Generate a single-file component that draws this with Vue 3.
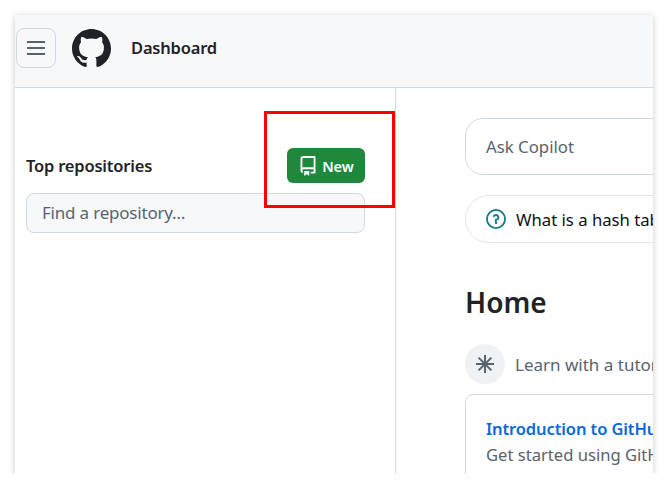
<script setup>
const repoPath = "M2 2.5A2.5 2.5 0 0 1 4.5 0h8.75a.75.75 0 0 1 .75.75v12.5a.75.75 0 0 1-.75.75h-2.5a.75.75 0 0 1 0-1.5h1.75v-2h-8a1 1 0 0 0-.714 1.7.75.75 0 1 1-1.072 1.05A2.495 2.495 0 0 1 2 11.5Zm10.5-1h-8a1 1 0 0 0-1 1v6.708A2.486 2.486 0 0 1 4.5 9h8ZM5 12.25a.25.25 0 0 1 .25-.25h3.5a.25.25 0 0 1 .25.25v3.25a.25.25 0 0 1-.4.2l-1.45-1.087a.249.249 0 0 0-.3 0L5.4 15.7a.25.25 0 0 1-.4-.2Z";
const markPath = "M8 0c4.42 0 8 3.58 8 8a8.013 8.013 0 0 1-5.45 7.59c-.4.08-.55-.17-.55-.38 0-.27.01-1.13.01-2.2 0-.75-.25-1.23-.54-1.48 1.78-.2 3.65-.88 3.65-3.95 0-.88-.31-1.59-.82-2.15.08-.2.36-1.02-.08-2.12 0 0-.67-.22-2.2.82-.64-.18-1.32-.27-2-.27-.68 0-1.36.09-2 .27-1.53-1.03-2.2-.82-2.2-.82-.44 1.1-.16 1.92-.08 2.12-.51.56-.82 1.28-.82 2.15 0 3.06 1.86 3.75 3.64 3.95-.23.2-.44.55-.51 1.07-.46.21-1.61.55-2.33-.66-.15-.24-.6-.83-1.23-.82-.67.01-.27.38.01.53.34.19.73.9.82 1.13.16.45.68 1.31 2.69.94 0 .67.01 1.3.01 1.49 0 .21-.15.45-.55.38A7.995 7.995 0 0 1 0 8c0-4.42 3.58-8 8-8Z";
const questionPath = "M0 8a8 8 0 1 1 16 0A8 8 0 0 1 0 8Zm8-6.5a6.5 6.5 0 1 0 0 13 6.5 6.5 0 0 0 0-13ZM6.92 6.085h.001a.749.749 0 1 1-1.299-.744c.428-.747 1.22-1.341 2.378-1.341 1.273 0 2.721.993 2.721 2.75 0 .901-.502 1.58-1.057 2.011-.273.212-.562.372-.82.485a2.242 2.242 0 0 1-.345.12V9.5a.75.75 0 0 1-1.5 0V8.75a.75.75 0 0 1 .75-.75c.002 0 .03-.002.059-.009.105-.024.217-.063.349-.12a2.56 2.56 0 0 0 .521-.312c.34-.264.5-.55.5-.809 0-.79-.653-1.25-1.221-1.25-.507 0-.824.217-1.04.585ZM9 11a1 1 0 1 1-2 0 1 1 0 0 1 2 0Z";
</script>

<template>
  <div class="window">
    <header class="topbar">
      <button class="menu" type="button" aria-label="Open menu">
        <svg width="18" height="14" viewBox="0 0 18 14"><path d="M0 1h18M0 7h18M0 13h18" stroke="#59636e" stroke-width="2" /></svg>
      </button>
      <svg class="mark" width="39" height="39" viewBox="0 0 16 16"><path :d="markPath" fill="#1f2328" /></svg>
      <span class="context">Dashboard</span>
    </header>
    <div class="content">
      <aside class="sidebar">
        <div class="side-head">
          <h2>Top repositories</h2>
          <button class="new" type="button">
            <svg width="20" height="20" viewBox="0 0 16 16"><path :d="repoPath" fill="#fff" /></svg>
            New
          </button>
        </div>
        <div class="find">Find a repository…</div>
      </aside>
      <main class="main">
        <div class="ask">Ask Copilot</div>
        <div class="suggest">
          <svg width="20" height="20" viewBox="0 0 16 16"><path :d="questionPath" fill="#1b7c83" /></svg>
          What is a hash table?
        </div>
        <h1>Home</h1>
        <div class="feed-row">
          <span class="badge">
            <svg width="20" height="20" viewBox="0 0 20 20"><path d="M10 1v18M1 10h18M3.6 3.6l12.8 12.8M16.4 3.6L3.6 16.4" stroke="#59636e" stroke-width="2" /></svg>
          </span>
          Learn with a tutorial project
        </div>
        <div class="card">
          <a class="card-title">Introduction to GitHub</a>
          <p>Get started using GitHub in less than an hour.</p>
        </div>
      </main>
    </div>
    <div class="highlight"></div>
  </div>
</template>

<style>
html, body { margin: 0; background: #fff; }
</style>

<style scoped>
.window {
  position: relative;
  box-sizing: border-box;
  width: 638px;
  height: 459px;
  margin: 15px 0 0 15px;
  overflow: hidden;
  border-radius: 3px 0 0 0;
  background: #fff;
  box-shadow: 0 1px 6px rgba(0, 0, 0, 0.22);
  font-family: "Noto Sans", "Open Sans", sans-serif;
  color: #1f2328;
  white-space: nowrap;
}
.topbar {
  box-sizing: border-box;
  height: 73px;
  display: flex;
  align-items: flex-start;
  padding: 13px 0 0 1px;
  background: #f6f8fa;
  border-bottom: 1px solid #d1d9e0;
}
.menu {
  box-sizing: border-box;
  width: 40px;
  height: 40px;
  display: flex;
  align-items: center;
  justify-content: center;
  padding: 0;
  background: #f6f8fa;
  border: 1px solid #d1d9e0;
  border-radius: 8px;
}
.mark { margin: 1px 0 0 16px; }
.context {
  margin-left: 20px;
  height: 40px;
  line-height: 40px;
  font-size: 16.5px;
  font-weight: 600;
  letter-spacing: -0.2px;
}
.content { display: flex; height: 386px; }
.sidebar {
  box-sizing: border-box;
  width: 381px;
  flex: none;
  padding: 60px 30px 0 11px;
  border-right: 1px solid #d1d9e0;
}
.side-head {
  display: flex;
  align-items: center;
  justify-content: space-between;
  height: 35px;
}
.side-head h2 {
  margin: 0;
  font-size: 16.5px;
  font-weight: 600;
  letter-spacing: -0.2px;
}
.new {
  box-sizing: border-box;
  width: 78px;
  height: 35px;
  display: flex;
  align-items: center;
  justify-content: center;
  gap: 4px;
  padding: 0;
  background: #1f883d;
  border: 0;
  border-radius: 6px;
  color: #fff;
  font-family: inherit;
  font-size: 14.5px;
  font-weight: 600;
}
.find {
  box-sizing: border-box;
  height: 40px;
  margin-top: 10px;
  padding: 0 15px;
  line-height: 38px;
  background: #f6f8fa;
  border: 1px solid #d1d9e0;
  border-radius: 8px;
  color: #59636e;
  font-size: 17px;
  letter-spacing: -0.2px;
}
.main { flex: 1; min-width: 0; padding: 30px 0 0 69px; }
.ask, .suggest, .card { width: 600px; box-sizing: border-box; }
.ask {
  height: 57px;
  padding-left: 20px;
  line-height: 56px;
  border: 1px solid #d1d9e0;
  border-radius: 18px;
  color: #59636e;
  font-size: 16.8px;
}
.suggest {
  height: 48px;
  margin-top: 20px;
  padding-left: 20px;
  display: flex;
  align-items: center;
  gap: 10px;
  border: 1px solid #e1e5ea;
  border-radius: 24px;
  color: #0d1117;
  font-size: 16.7px;
}
.main h1 {
  margin: 40px 0 0;
  height: 38px;
  line-height: 38px;
  font-size: 28px;
  font-weight: 600;
}
.feed-row {
  display: flex;
  align-items: center;
  gap: 10px;
  margin-top: 23px;
  color: #59636e;
  font-size: 17px;
}
.badge {
  flex: none;
  width: 40px;
  height: 40px;
  display: flex;
  align-items: center;
  justify-content: center;
  background: #eff2f5;
  border-radius: 50%;
}
.card {
  height: 120px;
  margin-top: 10px;
  padding: 22px 20px 0;
  border: 1px solid #d1d9e0;
  border-radius: 8px;
}
.card-title {
  display: block;
  height: 24px;
  line-height: 24px;
  color: #0969da;
  font-size: 16.5px;
  font-weight: 600;
  letter-spacing: -0.1px;
}
.card p {
  margin: 2px 0 0;
  line-height: 24px;
  color: #59636e;
  font-size: 16.6px;
}
.highlight {
  position: absolute;
  left: 249px;
  top: 96px;
  width: 131px;
  height: 97px;
  box-sizing: border-box;
  border: 3px solid #f00;
}
</style>
